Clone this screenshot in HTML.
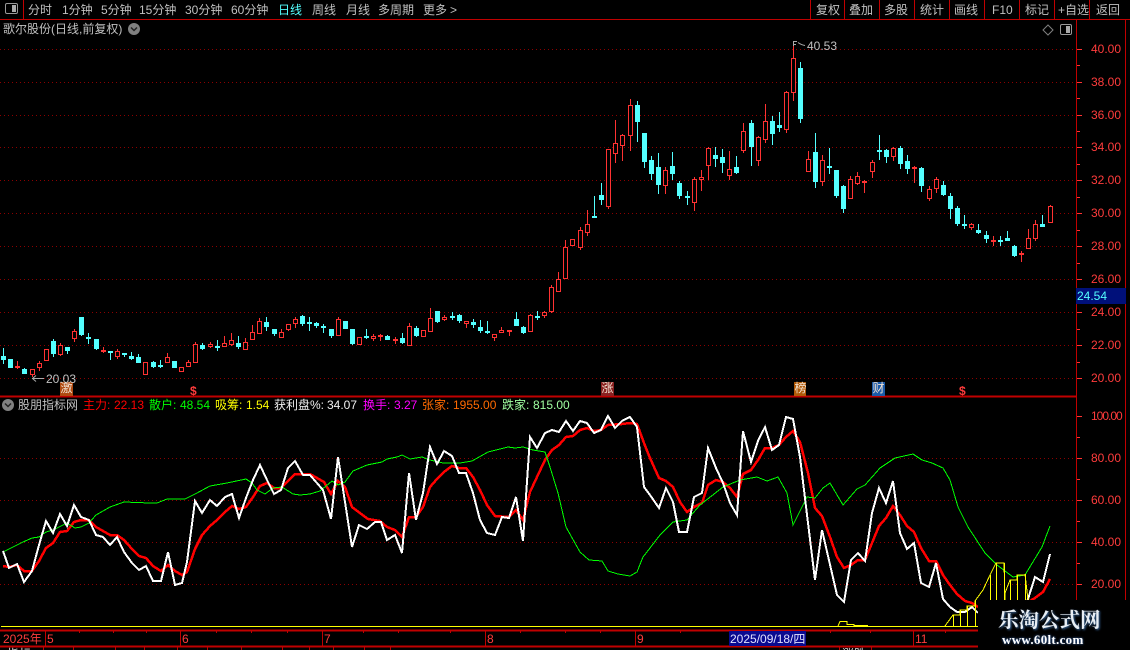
<!DOCTYPE html>
<html><head><meta charset="utf-8"><style>
html,body{margin:0;padding:0;background:#000}
#p{position:relative;width:1130px;height:650px;overflow:hidden;background:#000;font:12px/14px "Liberation Sans","WenQuanYi Zen Hei","Noto Sans CJK SC",sans-serif;color:#c0c0c0}
#p span{position:absolute;white-space:nowrap}
svg{position:absolute;left:0;top:0}
.r{color:#ff3c3c}.g{color:#00ff00}.y{color:#ffff00}.w{color:#f0f0f0}.m{color:#ff00ff}.o{color:#ff6a00}.l{color:#a0ffa0}
.b{color:#f0e0d0;width:13px;height:15px;text-align:center;line-height:15px}
</style></head><body><div id="p">
<svg width="1130" height="650" viewBox="0 0 1130 650" fill="none">
<path d="M0 49H1076M0 82H1076M0 115H1076M0 147H1076M0 180H1076M0 213H1076M0 246H1076M0 279H1076M0 312H1076M0 345H1076M0 378H1076M0 458H1076M0 500H1076M0 542H1076M0 584H1076" stroke="#8c0000" stroke-dasharray="1 3" transform="translate(0 .5)"/>
<path stroke="#c00000" d="M0 19.5H1130M23.5 0V19M810.5 0V19M844.5 0V19M879.5 0V19M914.5 0V19M949.5 0V19M984.5 0V19M1019.5 0V19M1054.5 0V19M1089.5 0V19M1076.5 19V600M1125.5 19V600"/>
<path stroke="#c00000" stroke-width="2" d="M0 396.5H1076"/>
<path stroke="#ff3232" d="M1077 49.5h5M1077 82.5h5M1077 115.5h5M1077 147.5h5M1077 180.5h5M1077 213.5h5M1077 246.5h5M1077 279.5h5M1077 312.5h5M1077 345.5h5M1077 378.5h5M1077 65.5h3M1077 98.5h3M1077 131.5h3M1077 164.5h3M1077 197.5h3M1077 230.5h3M1077 263.5h3M1077 296.5h3M1077 329.5h3M1077 362.5h3M1077 416.5h5M1077 458.5h5M1077 500.5h5M1077 542.5h5M1077 584.5h5M1077 437.5h3M1077 479.5h3M1077 521.5h3M1077 563.5h3"/>
<path stroke="#54ffff" d="M3.5 348V364M24.5 368V374M53.5 339V357M67.5 347V354M81.5 317V336M88.5 333V344M96.5 339V350M110.5 351V360M124.5 353V357M131.5 352V360M138.5 354V363M153.5 361V368M160.5 360V368M202.5 343V350M217.5 340V351M238.5 336V349M266.5 317V331M274.5 329V336M302.5 315V326M309.5 317V331M316.5 322V328M323.5 324V333M331.5 329V338M352.5 329V345M366.5 329V339M387.5 335V340M402.5 333V344M416.5 326V337M437.5 311V323M452.5 312V320M459.5 314V323M473.5 319V328M480.5 320V333M487.5 321V334M516.5 312V326M523.5 326V334M537.5 311V320M594.5 196V218M601.5 183V205M637.5 101V142M644.5 133V168M651.5 156V180M658.5 153V194M672.5 152V180M679.5 181V199M687.5 191V205M715.5 147V167M722.5 149V173M736.5 156V174M751.5 120V166M772.5 116V145M779.5 112V132M800.5 62V123M815.5 133V188M829.5 148V174M836.5 170V198M843.5 185V213M879.5 135V160M886.5 149V163M900.5 146V169M907.5 155V174M921.5 167V192M943.5 181V196M950.5 193V219M957.5 206V226M964.5 215V229M978.5 224V234M986.5 231V243M1000.5 236V246M1007.5 231V241M1014.5 245V257M1042.5 215V227"/>
<path stroke="#54ffff" stroke-width="5" d="M3.5 356V360M10.5 359V368M24.5 369V374M53.5 341V354M67.5 347V351M81.5 317V335M88.5 337V339M96.5 339V349M110.5 351V353M124.5 353V355M131.5 356V359M138.5 357V363M153.5 362V367M160.5 365V367M174.5 361V368M202.5 345V349M217.5 346V348M238.5 343V347M266.5 322V327M274.5 329V334M302.5 316V324M309.5 322V324M316.5 323V326M323.5 326V328M331.5 329V336M345.5 321V329M352.5 329V344M366.5 336V338M387.5 336V340M402.5 338V343M416.5 328V336M437.5 311V322M452.5 316V318M459.5 315V321M473.5 322V325M480.5 327V331M487.5 331V333M516.5 319V326M523.5 327V333M537.5 316V318M594.5 216V218M601.5 195V200M637.5 105V122M644.5 133V162M651.5 160V174M658.5 167V185M672.5 166V174M679.5 183V196M687.5 196V198M715.5 155V159M722.5 157V163M736.5 167V173M751.5 123V147M772.5 121V134M779.5 125V128M800.5 68V119M815.5 152V182M829.5 166V168M836.5 170V196M843.5 186V209M879.5 150V152M886.5 150V157M900.5 148V164M907.5 161V169M921.5 168V186M943.5 185V195M950.5 196V209M957.5 208V224M964.5 224V226M978.5 230V233M986.5 235V239M1000.5 240V242M1007.5 238V241M1014.5 246V256M1042.5 224V227"/>
<path stroke="#ff3232" d="M17.5 361V369M32.5 369V377M39.5 361V371M60.5 343V356M74.5 329V342M103.5 347V353M117.5 349V359M167.5 353V363M188.5 360V367M195.5 342V363M210.5 342V348M224.5 336V347M231.5 333V346M245.5 338V350M252.5 325V340M259.5 318V334M281.5 329V338M288.5 324V331M295.5 317V328M338.5 317V336M373.5 334V341M380.5 334V341M395.5 337V344M409.5 323V346M430.5 308V332M444.5 315V321M466.5 321V328M494.5 334V341M501.5 327V333M509.5 330V336M530.5 314V332M544.5 311V318M551.5 285V313M558.5 272V292M565.5 240V279M580.5 227V250M587.5 210V236M608.5 149V209M615.5 120V163M622.5 134V161M630.5 99V151M665.5 167V194M694.5 177V211M701.5 170V191M708.5 147V180M729.5 151V180M743.5 123V153M758.5 136V166M765.5 104V143M786.5 91V133M793.5 43V101M808.5 151V172M822.5 155V186M850.5 176V199M857.5 172V185M864.5 180V193M872.5 160V178M893.5 147V161M914.5 166V183M929.5 186V201M936.5 177V193M971.5 223V230M993.5 236V246M1021.5 251V262M1028.5 229V249M1035.5 220V241M1050.5 205V223"/>
<path stroke="#ff3232" fill="#000" d="M15.5 366.5h4v1h-4zM30.5 369.5h4v5h-4zM37.5 363.5h4v4h-4zM44.5 349.5h4v11h-4zM58.5 345.5h4v9h-4zM72.5 331.5h4v7h-4zM101.5 350.5h4v1h-4zM115.5 351.5h4v5h-4zM143.5 362.5h4v12h-4zM165.5 357.5h4v5h-4zM179.5 367.5h4v4h-4zM186.5 362.5h4v4h-4zM193.5 344.5h4v18h-4zM208.5 344.5h4v2h-4zM222.5 343.5h4v3h-4zM229.5 340.5h4v4h-4zM243.5 342.5h4v7h-4zM250.5 332.5h4v7h-4zM257.5 321.5h4v12h-4zM279.5 332.5h4v5h-4zM286.5 324.5h4v5h-4zM293.5 319.5h4v4h-4zM336.5 319.5h4v16h-4zM357.5 337.5h4v7h-4zM371.5 336.5h4v2h-4zM378.5 335.5h4v1h-4zM393.5 339.5h4v1h-4zM407.5 326.5h4v19h-4zM421.5 330.5h4v6h-4zM428.5 318.5h4v13h-4zM442.5 317.5h4v2h-4zM464.5 321.5h4v2h-4zM492.5 334.5h4v3h-4zM499.5 330.5h4v2h-4zM507.5 330.5h4v1h-4zM528.5 315.5h4v16h-4zM542.5 312.5h4v3h-4zM549.5 287.5h4v24h-4zM556.5 279.5h4v12h-4zM563.5 247.5h4v31h-4zM570.5 239.5h4v6h-4zM578.5 230.5h4v17h-4zM585.5 224.5h4v8h-4zM606.5 149.5h4v57h-4zM613.5 143.5h4v10h-4zM620.5 135.5h4v10h-4zM628.5 105.5h4v30h-4zM663.5 170.5h4v15h-4zM692.5 179.5h4v23h-4zM699.5 177.5h4v2h-4zM706.5 148.5h4v17h-4zM727.5 169.5h4v6h-4zM741.5 131.5h4v19h-4zM756.5 137.5h4v23h-4zM763.5 121.5h4v18h-4zM784.5 92.5h4v37h-4zM791.5 58.5h4v34h-4zM806.5 159.5h4v12h-4zM820.5 160.5h4v21h-4zM848.5 179.5h4v19h-4zM855.5 176.5h4v7h-4zM862.5 181.5h4v1h-4zM870.5 162.5h4v9h-4zM891.5 148.5h4v8h-4zM912.5 167.5h4v1h-4zM927.5 189.5h4v9h-4zM934.5 179.5h4v9h-4zM969.5 224.5h4v3h-4zM991.5 240.5h4v1h-4zM1019.5 253.5h4v1h-4zM1026.5 238.5h4v10h-4zM1033.5 224.5h4v14h-4zM1048.5 206.5h4v16h-4z"/>
<path stroke="#ff0000" stroke-width="2.5" shape-rendering="crispEdges" d="M3 566L9 567 17 565 24 571 32 571 39 561 46 548 53 543 60 532 67 531 74 522 81 520 89 520 96 527 103 531 110 535 117 535 124 540 132 549 139 556 146 558 153 566 161 571 168 565 175 571 182 575 187 572 195 549 202 535 210 526 217 520 225 512 232 506 239 509 246 507 253 497 260 486 267 483 274 488 281 488 288 481 295 474 303 474 310 474 324 482 331 494 338 481 345 487 352 507 360 513 368 519 380 521 387 527 395 530 402 537 409 517 416 517 423 507 430 487 437 479 444 472 452 466 459 468 466 468 473 477 480 490 487 505 495 516 509 517 516 510 523 520 530 492 537 477 545 460 552 450 559 445 566 437 573 436 580 430 587 428 594 431 601 430 608 425 622 424 630 423 637 424 644 443 650 458 659 478 666 481 673 487 680 502 687 512 694 507 702 503 708 485 716 480 723 482 730 488 737 497 743 474 751 470 758 460 765 448 772 448 779 445 786 437 793 431 800 442 808 473 815 508 822 516 830 537 837 557 844 568 851 565 858 560 865 560 872 543 879 526 886 518 893 506 900 515 907 526 914 532 921 548 929 561 936 561 943 575 950 585 957 594 965 601 972 603 978 607M1021 606L1035 598 1043 592 1050 579"/>
<path stroke="#00ff00" shape-rendering="crispEdges" d="M3 552L13 547 23 542 32 538 39 537 46 532 53 530 67 523 75 528 81 527 89 523 96 515 110 507 124 502 150 503 157 503 167 499 185 499 197 493 210 486 227 483 246 479 252 483 257 490 265 494 273 488 282 487 293 494 300 495 310 494 320 491 332 481 338 485 345 482 353 471 367 465 382 462 387 459 397 457 402 455 410 459 422 457 430 460 443 463 460 463 472 461 488 452 508 447 515 448 523 447 533 450 545 452 550 467 558 493 566 527 580 552 589 560 602 561 608 571 618 574 630 576 637 572 643 557 650 548 660 535 673 522 687 520 700 505 723 487 740 480 757 477 767 481 778 477 787 493 793 525 807 497 815 498 823 488 830 483 843 505 857 489 865 485 880 468 895 458 913 454 922 460 932 463 943 468 950 480 958 507 968 527 985 553 997 565 1013 577 1025 575 1042 547 1050 526"/>
<path stroke="#ffffff" stroke-width="2" shape-rendering="crispEdges" d="M3 551L9 568 17 564 24 582 32 571 39 545 46 521 53 533 60 514 67 526 74 505 81 517 89 520 96 535 103 537 110 545 117 537 124 552 132 563 139 570 146 566 153 581 161 581 168 552 175 585 182 583 187 562 195 501 202 513 210 500 217 506 225 497 232 494 239 518 246 498 253 480 260 465 267 480 274 494 281 490 288 468 295 461 303 475 310 475 323 490 331 519 338 457 352 547 359 525 367 529 375 522 381 522 387 540 395 535 402 553 409 473 416 520 423 493 430 447 437 464 444 451 452 456 459 473 466 473 473 493 480 520 487 533 495 535 502 517 509 518 516 497 523 541 530 437 537 448 545 433 552 430 559 432 566 421 573 431 580 421 587 423 594 433 601 430 608 416 615 428 622 421 630 417 637 427 644 487 650 495 659 508 666 488 673 502 679 532 687 532 694 497 702 493 708 448 716 468 723 483 730 503 737 515 743 431 751 462 758 441 765 427 772 450 779 445 786 417 793 419 800 457 808 523 815 580 822 530 837 595 844 602 851 560 858 553 865 561 872 513 879 488 886 503 893 481 900 533 907 549 914 543 921 583 929 587 936 563 943 599 950 607 957 612 965 612 972 607 978 613M1021 620L1028 599 1035 577 1043 582 1050 554"/>
<path stroke="#ffff00" d="M1 626.5H978M838 626L840 621.5H847V624.5H854V625.5H868"/>
<path stroke="#ffff00" shape-rendering="crispEdges" d="M945 626L953 615H960V610H967V606H975V601L983 590 990 575 996 563H1004L1005 600M1005 593L1010 580H1017V575H1025V574L1028 600"/>
<path stroke="#ffff00" d="M953.5 615V626M960.5 610V626M967.5 606V626M975.5 601V626M990.5 575V600M996.5 563V600M1004.5 563V600M1010.5 580V600M1017.5 575V600M1025.5 574V600"/>
<path stroke="#c00000" stroke-width="2" d="M0 630.5H978M0 646.5H978"/>
<path stroke="#c00000" d="M45.5 631V646M180.5 631V646M322.5 631V646M485.5 631V646M635.5 631V646M913.5 631V646M79.5 631V633M113.5 631V633M146.5 631V633M216.5 631V633M251.5 631V633M287.5 631V633M363.5 631V633M398.5 631V633M450.5 631V633M520.5 631V633M565.5 631V633M600.5 631V633M680.5 631V633M830.5 631V633M870.5 631V633M945.5 631V633M43.5 647V650M73.5 647V650M115.5 647V650M144.5 647V650M177.5 647V650M207.5 647V650M241.5 647V650M282.5 647V650M309.5 647V650M333.5 647V650M364.5 647V650M390.5 647V650M839.5 647V650M871.5 647V650"/>
<path stroke="#aaa" d="M32 378.5H44M36 375.5L32.5 378.5 36 381.5"/>
<path stroke="#aaa" d="M793.5 46V41.5H797M793.5 44.5H796M798 42.5C800 44 802 45 805 45.5"/>
<circle cx="134" cy="29" r="6" fill="#808080"/><path d="M131 27.5L134 30.5 137 27.5" stroke="#222" stroke-width="1.5"/>
<circle cx="8" cy="405" r="6" fill="#808080"/><path d="M5 403.5L8 406.5 11 403.5" stroke="#222" stroke-width="1.5"/>
<path d="M1048 25L1053 30 1048 35 1043 30Z" stroke="#808080"/>
<rect x="5.5" y="3.5" width="12" height="10" rx="1.5" stroke="#999"/><rect x="12" y="5" width="4" height="7" fill="#aaa"/>
<rect x="1060.5" y="24.5" width="11" height="10" rx="1.5" stroke="#999"/><rect x="1066" y="26" width="4" height="7" fill="#aaa"/>
<rect x="60" y="382" width="13" height="14" fill="#b04a10"/>
<rect x="601" y="382" width="13" height="14" fill="#8a2020"/>
<rect x="794" y="382" width="12" height="14" fill="#b05a08"/>
<rect x="872" y="382" width="13" height="14" fill="#1a5aa8"/>
<rect x="1076" y="288" width="50" height="16" fill="#00107a"/>
<rect x="729" y="631" width="77" height="15" fill="#0a0a90"/>
<rect x="978" y="600" width="152" height="50" fill="#000"/>
</svg>

<span style="left:28px;top:3px">分时</span>
<span style="left:62px;top:3px">1分钟</span>
<span style="left:101px;top:3px">5分钟</span>
<span style="left:139px;top:3px">15分钟</span>
<span style="left:185px;top:3px">30分钟</span>
<span style="left:231px;top:3px">60分钟</span>
<span style="left:278px;top:3px;color:#54ffff">日线</span>
<span style="left:312px;top:3px">周线</span>
<span style="left:346px;top:3px">月线</span>
<span style="left:378px;top:3px">多周期</span>
<span style="left:423px;top:3px">更多</span>
<span style="left:450px;top:3px">&gt;</span>
<span style="left:816px;top:3px">复权</span>
<span style="left:849px;top:3px">叠加</span>
<span style="left:884px;top:3px">多股</span>
<span style="left:920px;top:3px">统计</span>
<span style="left:954px;top:3px">画线</span>
<span style="left:992px;top:3px">F10</span>
<span style="left:1025px;top:3px">标记</span>
<span style="left:1058px;top:3px">+自选</span>
<span style="left:1096px;top:3px">返回</span>
<span style="left:3px;top:22px">歌尔股份(日线,前复权)</span>

<span style="left:807px;top:39px">40.53</span>
<span style="left:46px;top:372px">20.03</span>
<span class="b" style="left:60px;top:381px">激</span>
<span class="b" style="left:601px;top:381px">涨</span>
<span class="b" style="left:794px;top:381px">榜</span>
<span class="b" style="left:872px;top:381px">财</span>
<span class="r" style="left:190px;top:384px;font-weight:bold">$</span>
<span class="r" style="left:959px;top:384px;font-weight:bold">$</span>

<span class="r" style="left:1091px;top:42px">40.00</span>
<span class="r" style="left:1091px;top:75px">38.00</span>
<span class="r" style="left:1091px;top:108px">36.00</span>
<span class="r" style="left:1091px;top:140px">34.00</span>
<span class="r" style="left:1091px;top:173px">32.00</span>
<span class="r" style="left:1091px;top:206px">30.00</span>
<span class="r" style="left:1091px;top:239px">28.00</span>
<span class="r" style="left:1091px;top:272px">26.00</span>
<span class="r" style="left:1091px;top:305px">24.00</span>
<span class="r" style="left:1091px;top:338px">22.00</span>
<span class="r" style="left:1091px;top:371px">20.00</span>
<span style="left:1077px;top:289px;color:#54ffff">24.54</span>
<span class="r" style="left:1091px;top:409px;letter-spacing:-1px">100.00</span>
<span class="r" style="left:1091px;top:451px">80.00</span>
<span class="r" style="left:1091px;top:493px">60.00</span>
<span class="r" style="left:1091px;top:535px">40.00</span>
<span class="r" style="left:1091px;top:577px">20.00</span>

<span style="left:18px;top:398px">股朋指标网</span>
<span class="r" style="left:83px;top:398px;color:#ff0000">主力:</span><span class="r" style="left:114px;top:398px;color:#ff0000">22.13</span>
<span class="g" style="left:149px;top:398px">散户:</span><span class="g" style="left:180px;top:398px">48.54</span>
<span class="y" style="left:215px;top:398px">吸筹:</span><span class="y" style="left:246px;top:398px">1.54</span>
<span class="w" style="left:274px;top:398px">获利盘%:</span><span class="w" style="left:327px;top:398px">34.07</span>
<span class="m" style="left:363px;top:398px">换手:</span><span class="m" style="left:394px;top:398px">3.27</span>
<span class="o" style="left:422px;top:398px">张家:</span><span class="o" style="left:453px;top:398px">1955.00</span>
<span class="l" style="left:502px;top:398px">跌家:</span><span class="l" style="left:533px;top:398px">815.00</span>

<span class="r" style="left:3px;top:632px">2025年</span>
<span class="r" style="left:47px;top:632px">5</span>
<span class="r" style="left:182px;top:632px">6</span>
<span class="r" style="left:324px;top:632px">7</span>
<span class="r" style="left:487px;top:632px">8</span>
<span class="r" style="left:637px;top:632px">9</span>
<span style="left:730px;top:632px;color:#e0e0ff">2025/09/18/四</span>
<span class="r" style="left:915px;top:632px">11</span>
<span style="left:7px;top:647px;color:#ddd">指标</span>
<span style="left:842px;top:647px;color:#ddd">涨跌</span>

<span style="left:998px;top:606px;font:bold 20.5px/24px 'Noto Serif CJK SC','Noto Sans CJK SC',serif;color:#e8eef4;text-shadow:1px 1px 2px #3a6aa0">乐淘公式网</span>
<span style="left:1002px;top:632px;font:bold 13px/15px 'Liberation Serif',serif;color:#fff;text-shadow:0 0 2px #3a70c0;letter-spacing:.3px">www.60lt.com</span>
</div></body></html>
